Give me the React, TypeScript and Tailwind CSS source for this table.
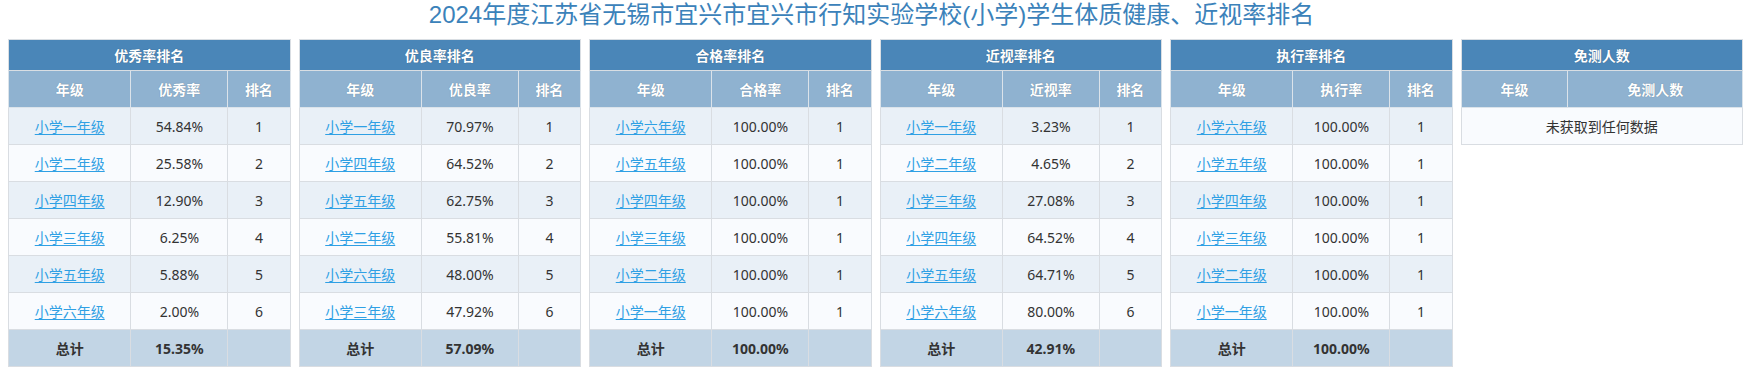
import React from "react";

type Row = { grade: string; value: string; rank: number };

type RankTable = {
  title: string;
  metric: string;
  rows: Row[];
  total: string;
};

const order = (names: string[], values: string[], ranks: number[]): Row[] =>
  names.map((n, i) => ({ grade: `小学${n}年级`, value: values[i], rank: ranks[i] }));

const tables: RankTable[] = [
  {
    title: "优秀率排名",
    metric: "优秀率",
    rows: order(
      ["一", "二", "四", "三", "五", "六"],
      ["54.84%", "25.58%", "12.90%", "6.25%", "5.88%", "2.00%"],
      [1, 2, 3, 4, 5, 6],
    ),
    total: "15.35%",
  },
  {
    title: "优良率排名",
    metric: "优良率",
    rows: order(
      ["一", "四", "五", "二", "六", "三"],
      ["70.97%", "64.52%", "62.75%", "55.81%", "48.00%", "47.92%"],
      [1, 2, 3, 4, 5, 6],
    ),
    total: "57.09%",
  },
  {
    title: "合格率排名",
    metric: "合格率",
    rows: order(
      ["六", "五", "四", "三", "二", "一"],
      Array(6).fill("100.00%"),
      [1, 1, 1, 1, 1, 1],
    ),
    total: "100.00%",
  },
  {
    title: "近视率排名",
    metric: "近视率",
    rows: order(
      ["一", "二", "三", "四", "五", "六"],
      ["3.23%", "4.65%", "27.08%", "64.52%", "64.71%", "80.00%"],
      [1, 2, 3, 4, 5, 6],
    ),
    total: "42.91%",
  },
  {
    title: "执行率排名",
    metric: "执行率",
    rows: order(
      ["六", "五", "四", "三", "二", "一"],
      Array(6).fill("100.00%"),
      [1, 1, 1, 1, 1, 1],
    ),
    total: "100.00%",
  },
];

const head =
  "h-[31px] bg-[#4a86b8] text-white font-bold text-[14px] border border-[#d9dee3] [text-shadow:0_0_1px_rgba(0,0,0,0.35)]";
const sub =
  "h-[37px] bg-[#8fb2d0] text-white font-bold text-[14px] border border-[#dbe3ea] [text-shadow:0_0_1px_rgba(0,0,0,0.3)]";
const cell = "h-[37px] border border-[#d9dde2] text-center";

function Ranking({ t }: { t: RankTable }) {
  return (
    <table className="w-full table-fixed border-collapse text-[14px] text-[#333]">
      <colgroup>
        <col className="w-[43.5%]" />
        <col className="w-[34.4%]" />
        <col />
      </colgroup>
      <thead>
        <tr>
          <th colSpan={3} className={head}>
            {t.title}
          </th>
        </tr>
        <tr>
          <th className={sub}>年级</th>
          <th className={sub}>{t.metric}</th>
          <th className={sub}>排名</th>
        </tr>
      </thead>
      <tbody>
        {t.rows.map((r, i) => (
          <tr key={r.grade} className={i % 2 === 0 ? "bg-[#e9f0f7]" : "bg-[#f9fbfe]"}>
            <td className={cell}>
              <a href="#" className="text-[#2fa0e4] underline underline-offset-2">
                {r.grade}
              </a>
            </td>
            <td className={cell}>{r.value}</td>
            <td className={cell}>{r.rank}</td>
          </tr>
        ))}
        <tr className="bg-[#c2d5e5] font-bold">
          <td className={cell}>总计</td>
          <td className={cell}>{t.total}</td>
          <td className={cell}></td>
        </tr>
      </tbody>
    </table>
  );
}

export default function App() {
  return (
    <div className="w-[1743px] h-[370px] overflow-hidden bg-white font-['Noto_Sans','Noto_Sans_CJK_SC',sans-serif]">
      <h1 className="h-[39px] text-center text-[24px] leading-[30px] text-[#3b82ba] font-['Liberation_Sans','Noto_Sans_CJK_SC',sans-serif]">
        2024年度江苏省无锡市宜兴市宜兴市行知实验学校(小学)学生体质健康、近视率排名
      </h1>
      <div className="grid grid-cols-6">
        {tables.map((t) => (
          <div key={t.title} className="pl-2">
            <Ranking t={t} />
          </div>
        ))}
        <div className="pl-2">
          <table className="w-full table-fixed border-collapse text-[14px] text-[#333]">
            <colgroup>
              <col className="w-[38%]" />
              <col />
            </colgroup>
            <thead>
              <tr>
                <th colSpan={2} className={head}>
                  免测人数
                </th>
              </tr>
              <tr>
                <th className={sub}>年级</th>
                <th className={sub}>免测人数</th>
              </tr>
            </thead>
            <tbody>
              <tr className="bg-[#f9fbfe]">
                <td colSpan={2} className={cell}>
                  未获取到任何数据
                </td>
              </tr>
            </tbody>
          </table>
        </div>
      </div>
    </div>
  );
}
